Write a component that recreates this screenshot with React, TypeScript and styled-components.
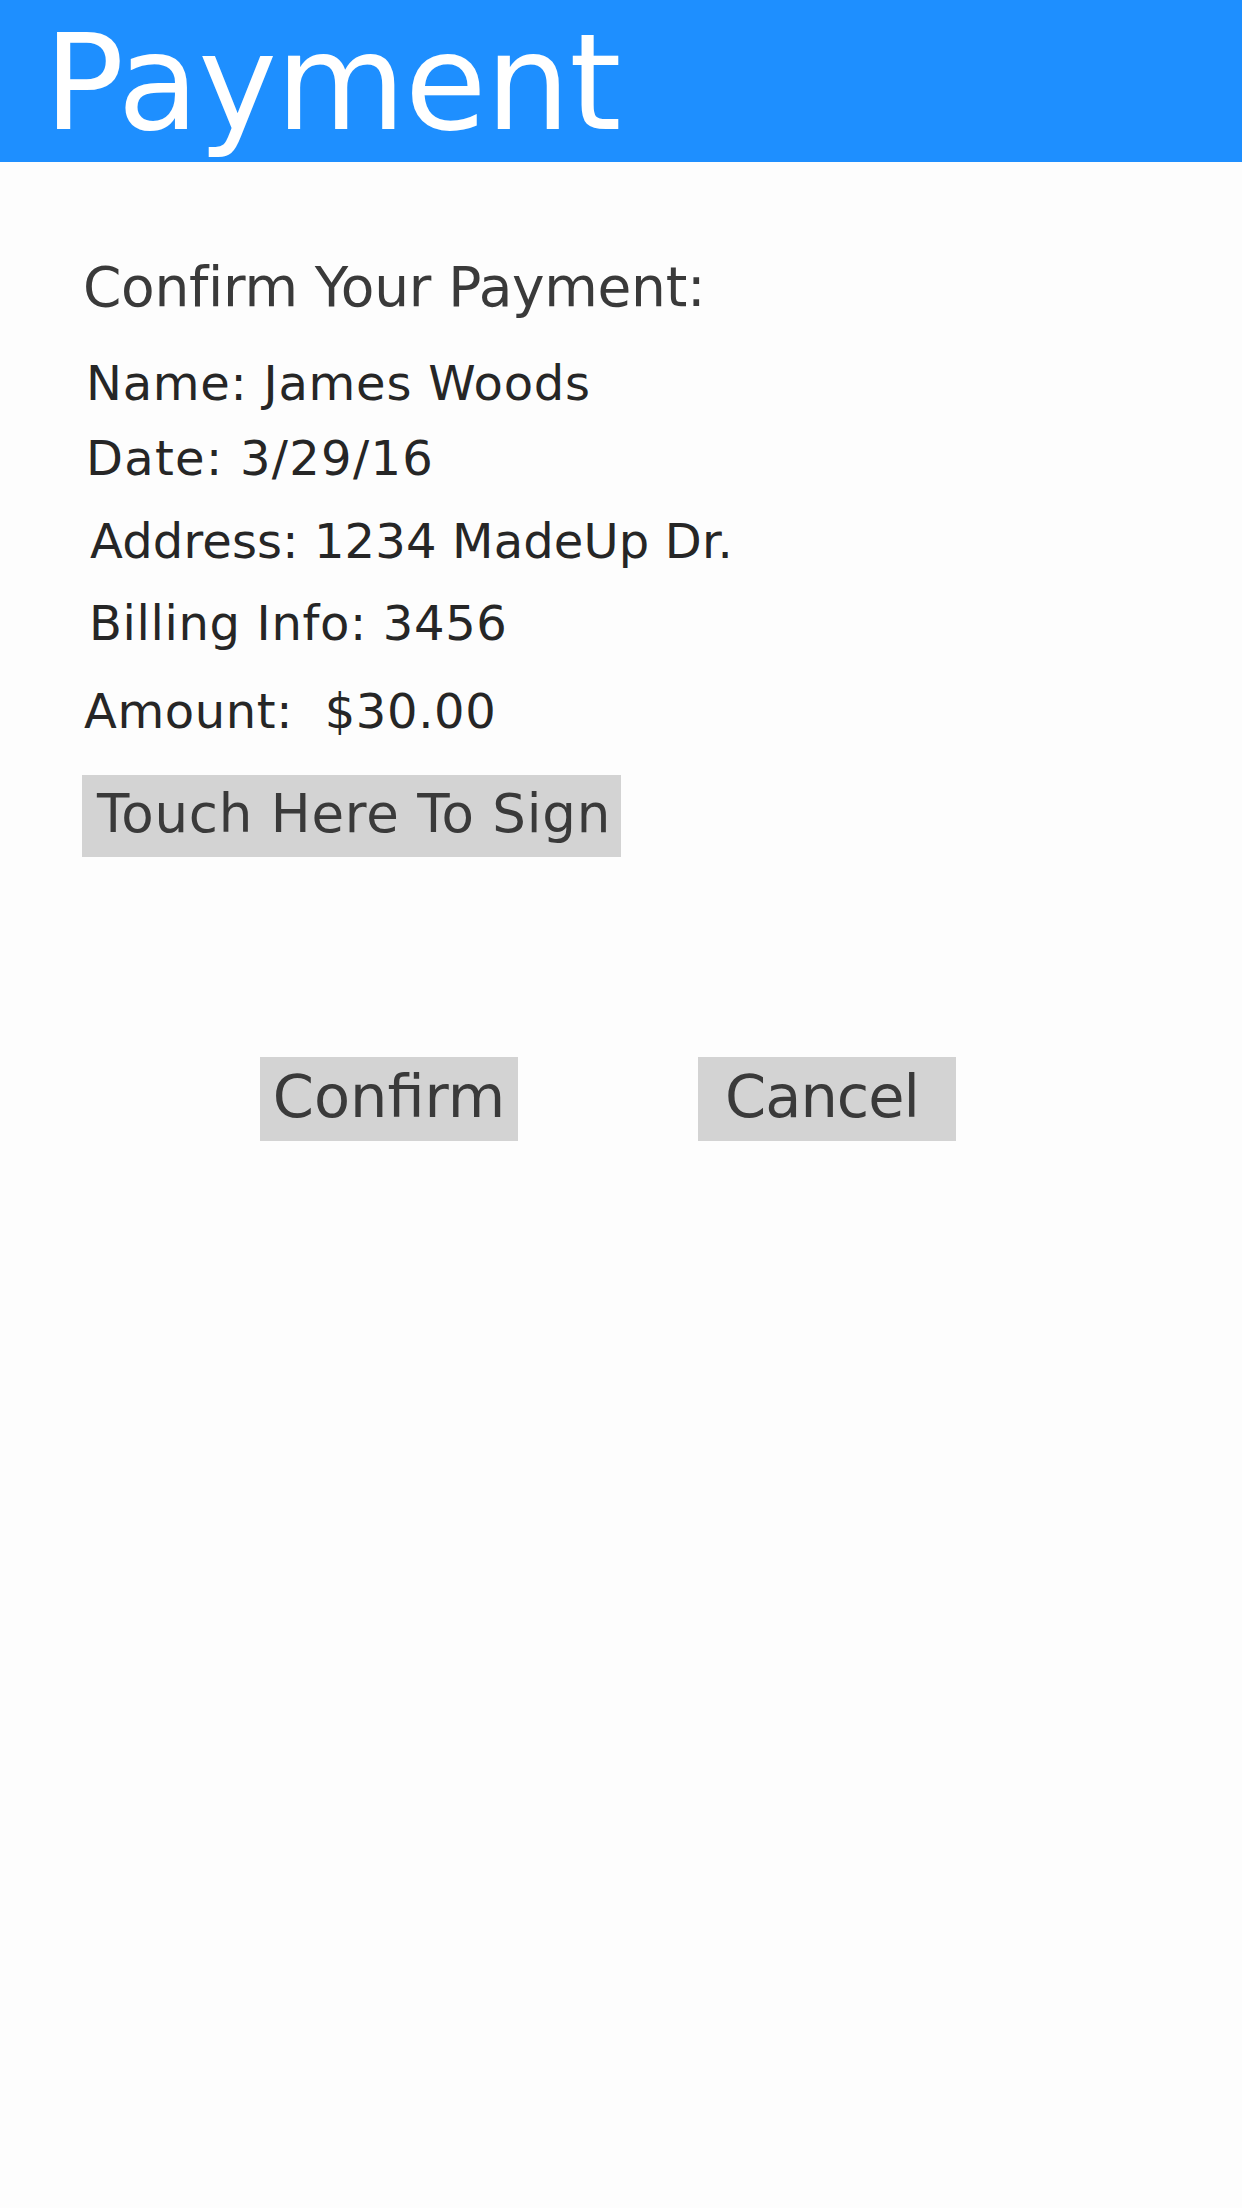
import { FC } from "react";
import styled, { createGlobalStyle } from "styled-components";

const GlobalStyle = createGlobalStyle`
  html, body {
    margin: 0;
    padding: 0;
    background: #fdfdfd;
  }
  body {
    font-family: "DejaVu Sans", Verdana, sans-serif;
  }
`;

const Page = styled.div`
  width: 1242px;
  min-height: 2208px;
  background: #fdfdfd;
`;

const Header = styled.header`
  height: 162px;
  box-sizing: border-box;
  padding: 17px 0 0 44px;
  background: #1e8fff;
  color: #ffffff;
  font-size: 133px;
  line-height: 1;
  letter-spacing: -0.8px;
  overflow: hidden;
`;

const Content = styled.main`
  display: flex;
  flex-direction: column;
  align-items: flex-start;
  padding-top: 98px;
`;

const Heading = styled.h2`
  margin: 0 0 0 83px;
  font-size: 55px;
  font-weight: normal;
  line-height: 1;
  letter-spacing: -0.3px;
  color: #3a3a3a;
`;

const Line = styled.p<{ $top: number; $left: number; $spacing: number }>`
  margin: ${(p) => p.$top}px 0 0 ${(p) => p.$left}px;
  font-size: 48px;
  line-height: 1;
  letter-spacing: ${(p) => p.$spacing}px;
  color: #262626;
  white-space: pre;
`;

const SignBox = styled.button`
  margin: 40px 0 0 82px;
  width: 539px;
  height: 82px;
  box-sizing: border-box;
  padding: 0 0 4px 15px;
  border: none;
  background: #d3d3d3;
  color: #3a3a3a;
  font-family: inherit;
  font-size: 53px;
  line-height: 78px;
  letter-spacing: 0.8px;
  text-align: left;
  white-space: nowrap;
`;

const Actions = styled.div`
  display: flex;
  gap: 180px;
  margin-top: 200px;
  padding-left: 260px;
`;

const ActionButton = styled.button<{ $nudge?: number; $spacing?: number }>`
  width: 258px;
  height: 84px;
  box-sizing: border-box;
  padding: 0 ${(p) => p.$nudge ?? 0}px 4px 0;
  border: none;
  background: #d3d3d3;
  color: #3a3a3a;
  font-family: inherit;
  font-size: 59px;
  line-height: 80px;
  letter-spacing: ${(p) => p.$spacing ?? 0}px;
  text-align: center;
`;

const details = [
  { text: "Name: James Woods", top: 44, left: 86, spacing: 0.75 },
  { text: "Date: 3/29/16", top: 27, left: 86, spacing: 1.3 },
  { text: "Address: 1234 MadeUp Dr.", top: 35, left: 90, spacing: 0.15 },
  { text: "Billing Info: 3456", top: 34, left: 89, spacing: 0.65 },
  { text: "Amount:  $30.00", top: 40, left: 84, spacing: 0.6 },
];

const App: FC = () => {
  return (
    <Page>
      <GlobalStyle />
      <Header>Payment</Header>
      <Content>
        <Heading>Confirm Your Payment:</Heading>
        {details.map((d) => (
          <Line key={d.text} $top={d.top} $left={d.left} $spacing={d.spacing}>
            {d.text}
          </Line>
        ))}
        <SignBox>Touch Here To Sign</SignBox>
      </Content>
      <Actions>
        <ActionButton>Confirm</ActionButton>
        <ActionButton $nudge={10} $spacing={-1}>
          Cancel
        </ActionButton>
      </Actions>
    </Page>
  );
};

export default App;
